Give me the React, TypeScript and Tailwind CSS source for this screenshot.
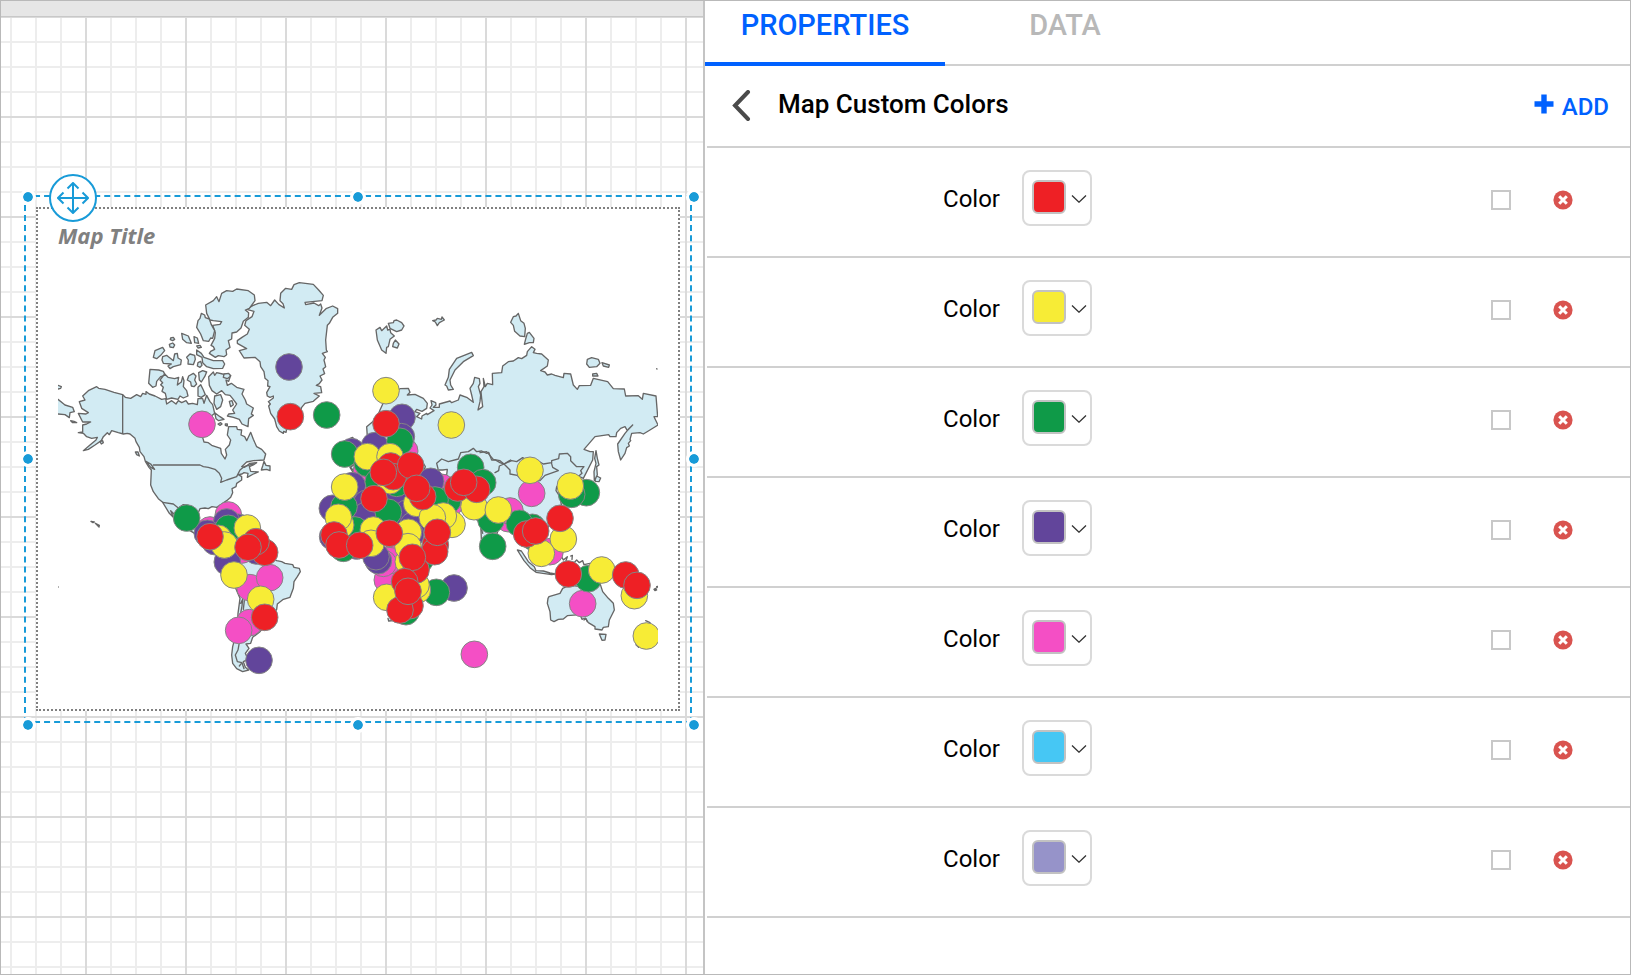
import React from "react";

const swatches = [
    { id: "red", hex: "#ee2025" },
    { id: "yellow", hex: "#f7ec36" },
    { id: "green", hex: "#0f9a48" },
    { id: "purple", hex: "#62459b" },
    { id: "pink", hex: "#f44fc5" },
    { id: "sky", hex: "#46c7f4" },
    { id: "lavender", hex: "#9693c9" },
];

// Map units are a third of a pixel. Later layers are painted over earlier ones.
const bubbleLayers: { color: string; points: [number, number][] }[] = [
    {
        color: "#f44fc5",
        points: [
            [486, 463], [1094, 543], [980, 600], [1205, 652], [1042, 930], [1062, 862], [1050, 872], [1030, 880],
            [565, 735], [510, 780], [605, 840], [630, 953], [689, 923], [628, 1058], [596, 1081], [1303, 1153],
            [1475, 670], [1405, 746], [1410, 723], [1530, 845], [1628, 1001], [1230, 700],
        ],
    },
    {
        color: "#62459b",
        points: [
            [747, 291], [1086, 442], [1084, 500], [1004, 527], [935, 545], [1172, 634], [937, 647], [877, 715],
            [980, 700], [980, 735], [1070, 655], [1070, 690], [1100, 730], [1120, 765], [1112, 795], [878, 800],
            [950, 828], [1015, 872], [1008, 860], [1242, 954], [595, 772], [560, 756], [502, 790], [525, 815],
            [562, 876], [650, 843], [657, 1171],
        ],
    },
    {
        color: "#0f9a48",
        points: [
            [440, 744], [860, 435], [1080, 514], [914, 552], [982, 580], [1015, 635], [1070, 640], [1292, 592],
            [1328, 638], [912, 710], [1045, 727], [1223, 692], [1185, 690], [945, 780], [910, 835], [1140, 870],
            [1098, 1025], [1189, 967], [565, 775], [1353, 750], [1358, 829], [1477, 772], [1478, 800], [1438, 760],
            [1639, 668], [1595, 673], [1645, 926],
        ],
    },
    {
        color: "#f7ec36",
        points: [
            [1038, 362], [982, 560], [1050, 560], [1234, 465], [914, 651], [902, 765], [895, 742], [1050, 632],
            [1130, 700], [1236, 763], [1210, 738], [1177, 743], [1302, 710], [1375, 720], [1000, 780], [993, 820],
            [1105, 787], [1105, 875], [1104, 830], [1040, 982], [1132, 960], [1128, 945], [622, 774], [535, 805],
            [553, 825], [582, 915], [662, 988], [1470, 601], [1591, 648], [1570, 807], [1504, 850], [1685, 900],
            [1783, 977], [1819, 1098],
        ],
    },
    {
        color: "#ee2025",
        points: [
            [751, 440], [1038, 461], [1052, 588], [1060, 620], [1030, 607], [1112, 586], [1148, 680], [1130, 655],
            [1002, 686], [1253, 654], [1310, 658], [1271, 637], [882, 795], [897, 825], [959, 826], [1048, 790],
            [1186, 825], [1184, 845], [1192, 787], [1128, 900], [1117, 862], [1094, 935], [1110, 1007], [1080, 1020],
            [1104, 964], [510, 800], [674, 847], [648, 815], [624, 832], [674, 1042], [1460, 792], [1487, 783],
            [1560, 745], [1585, 912], [1757, 915], [1791, 946],
        ],
    },
];

function WorldMap() {
    return (
        <svg className="block h-[420px] w-[600px]" viewBox="54 0 1800 1260" role="img" aria-label="World map with coloured bubbles">
            <g fill="#d2ebf3" stroke="#666" strokeWidth="4" strokeLinejoin="round" strokeLinecap="round">
                {/* Greenland */}
                <path d="M638 107L655 100 680 97 692 107 704 90 716 103 733 114 729 101 720 92 722 70 737 55 755 58 762 44 778 38 820 43 836 60 850 76 846 92 795 97 797 104 822 99 836 107 842 102 846 114 838 136 858 116 878 108 893 116 893 130 878 142 868 160 862 166 857 210 859 240 862 245 847 250 856 262 852 270 857 290 849 297 854 311 840 318 846 330 838 341 829 346 842 350 845 368 822 370 838 378 820 394 795 400 785 412 776 440 740 478 738 487 731 484 730 490 718 483 710 470 704 447 692 430 686 408 691 402 685 395 700 384 700 378 690 382 682 378 680 368 690 350 683 348 684 332 675 325 672 305 662 290 660 275 645 262 612 264 598 242 620 236 592 220 592 212 606 202 622 192 628 178 614 166 618 152 636 140 642 124 620 118Z" />

                {/* Arctic islands */}
                <path d="M497 105L520 92 530 80 537 95 545 70 560 62 578 64 590 57 625 62 643 75 645 92 628 115 616 120 626 128 625 142 610 154 603 174 590 186 576 189 575 207 565 212 570 232 558 240 560 254 552 260 535 257 526 262 508 250 512 244 524 238 520 230 513 226 524 205 526 188 518 166 540 163 545 155 520 152 510 150 500 130Z" />
                <path d="M484 130L494 135 496 143 508 147 514 164 524 182 518 205 512 204 506 214 490 212 482 192 470 172 474 152 480 145Z" />
                <path d="M425 190L445 198 454 220 440 218 428 208Z" />
                <path d="M462 200L472 204 476 220 464 218Z" />
                <path d="M392 204l8-2 4 6-6 4-7-3zM388 223l10-4 6 6-4 8-10-2zM470 228l10-2 4 6-10 2z" />
                <path d="M340 262L345 242 368 232 374 242 362 256 350 266Z" />
                <path d="M368 260L380 256 400 272 404 252 412 250 414 264 424 270 422 284 400 290 390 296 384 288 394 282 370 280 366 270Z" />
                <path d="M440 262L450 252 464 256 466 268 460 284 444 282 445 270Z" />
                <path d="M470 240L484 250 492 262 520 272 548 272 554 282 548 295 520 296 500 290 488 278 486 262 470 254Z" />
                <path d="M474 278l8-4 4 12-6 6-8-4z" />
                <path d="M330 298L356 300 370 304 376 316 362 320 350 334 348 348 338 352 326 340Z" />
                <path d="M374 312L384 322 404 326 416 322 412 345 424 336 428 320 432 332 430 350 440 362 444 378 430 384 420 378 414 388 395 384 380 388 376 370 366 364 370 352 362 344 368 338 360 330Z" />
                <path d="M446 318L460 310 468 318 464 330 470 342 462 350 454 348 452 336 442 330Z" />
                <path d="M476 308L488 302 500 306 494 320 484 336 478 330Z" />
                <path d="M474 378L474 352 482 344 490 360 496 374 484 382Z" />
                <path d="M506 320L520 306 524 316 530 308 548 312 572 316 566 334 558 330 562 346 574 340 590 352 612 358 606 372 616 390 620 402 640 414 634 432 640 436 626 446 624 470 606 462 598 448 580 442 562 438 566 432 584 430 578 420 590 402 578 386 570 376 556 374 545 362 530 372 516 362 508 346Z" />
                <path d="M552 312l14-2 6 8-10 8-12-4zM524 378L542 374 548 390 542 410 530 418 522 400ZM568 394l8-2 4 12-8 6zM534 462l8-4 4 4-6 4zM556 462l6 0 0 6-6-2z" />
                <path d="M524 428L540 440 552 448 536 452 528 446Z" />

                {/* North America */}
                <path d="M170 350L176 355 195 358 222 367 248 374 256 382 272 385 290 374 302 380 308 370 318 373 318 365 328 372 345 378 365 388 377 386 380 402 395 392 408 402 415 392 425 398 438 392 445 402 458 400 472 404 474 386 488 386 492 400 500 376 510 395 518 404 524 430 500 450 470 480 488 503 492 516 505 518 515 526 533 532 542 535 544 550 555 567 560 555 556 538 568 525 572 510 562 495 566 470 590 470 592 478 605 480 603 495 614 500 620 512 632 487 640 508 650 530 665 538 677 552 672 570 640 572 620 576 605 590 614 592 630 580 650 578 640 585 628 590 632 604 655 606 640 612 622 622 624 610 612 608 606 612 595 614 605 620 605 630 590 640 588 650 576 656 578 668 572 682 560 692 545 702 530 712 516 710 505 716 495 714 480 716 474 730 480 760 520 800 480 800 430 770 405 735 392 722 400 742 388 730 368 697 355 686 340 665 332 645 334 600 327 592 316 574 312 560 300 545 298 532 288 515 285 505 270 492 262 490 250 492 235 488 215 482 208 494 202 488 190 500 184 512 165 525 145 538 130 542 150 525 168 510 172 502 155 505 140 500 130 490 115 488 128 486 128 465 140 462 152 456 128 456 115 430 138 432 145 428 125 415 118 395 135 390 128 378 145 362Z" />
                <path d="M672 574L678 586 690 588 690 602 680 598 664 600 668 588Z" />
                <path d="M286 546l8 0 4 12-8-4zM318 574l14 8 12 16-12-6zM180 515l8-3 2 6-6 4z" />
                <path fill="none" d="M248 374V490M340 585H480L490 590 505 592 525 598 538 610 545 625 542 637 560 630 590 620 600 600 612 590 640 582M368 697L400 702 415 714 430 704 446 706" />
                <path d="M54 388L75 405 98 412 103 425 90 428 88 443 75 434 54 432M54 346L64 350 62 355 54 357M92 452l10 2 8 4-12 0zM153 754l10 2-4 2zM166 760l12 6-1 5z" />

                {/* South America */}
                <g transform="translate(360 630)">
                    <path d="M350 242L365 245 375 250 398 254 402 262 418 265 421 275 412 290 402 305 400 325 390 352 370 358 352 372 350 388 320 430 300 455 278 472 272 490 258 492 267 505 256 520 264 538 250 545 256 562 266 570 248 575 230 566 218 550 215 525 218 500 222 485 232 440 234 400 240 355 225 320 185 260 180 220 200 160 260 170 320 215Z" />
                    <path fill="none" d="M242 370L248 358 246 378 240 410M253 362L250 388M238 488L234 510 226 525 232 545 246 548 238 558M246 548L252 566" />
                </g>

                {/* Europe and Asia */}
                <g transform="translate(780 0)">
                    <path d="M202 500L200 470 218 455 232 440 240 420 250 398 262 395 280 372 300 356 325 355 330 367 322 375 345 373 370 385 382 400 380 415 366 424 350 418 345 425 360 430 350 440 365 447 366 438 380 430 382 434 402 422 390 414 396 405 393 392 407 398 408 405 400 412 418 412 418 402 450 393 455 398 475 390 480 375 500 382 520 397 515 375 510 355 520 340 524 322 538 326 540 340 535 350 542 375 540 395 534 420 548 410 545 385 543 365 552 350 550 325 556 350 562 340 578 344 577 310 605 308 608 288 625 275 640 273 655 263 665 266 680 256 682 245 695 230 705 238 700 248 710 250 725 252 745 270 742 288 722 302 735 306 742 315 755 312 765 316 790 323 792 310 812 312 820 345 832 358 838 347 872 346 880 325 923 335 940 356 973 357 977 378 1015 377 1027 388 1030 370 1068 378 1073 440 1062 440 1074 465 1045 483 1030 492 1020 488 995 490 990 508 992 512 985 520 988 528 980 533 975 550 962 570 955 545 953 522 975 490 985 478 998 465 982 482 975 470 962 475 950 488 948 500 930 500 926 494 885 500 852 538 870 545 880 545 878 570 850 625 835 618 815 640 780 645 770 650 768 662 780 680 785 710 760 750 730 790 700 810 660 800 600 760 580 830 560 850 545 830 542 760 525 745 480 720 440 700 430 760 380 790 350 740 300 720 250 640 180 640 150 592 200 560 230 520Z" />
                    <path fill="#fff" d="M412 600L428 600 442 598 440 615 425 615Z" />
                    <path fill="none" d="M370 580L376 590 372 600M414 596L410 580 425 567 445 575 475 567 482 548 505 545 520 535 530 545 545 543 560 550 566 547 575 570 586 570 600 578M600 578L612 582 632 570" />
                    <path d="M435 345L445 322 448 298 470 265 515 247 520 257 490 275 465 300 450 330 452 345 460 358 445 360 440 348Z" />
                    <path d="M228 180L240 172 245 182 260 168 263 180 270 178 272 188 283 198 270 208 265 230 260 232 258 250 245 240 232 210Z" />
                    <path d="M265 160L280 158 282 152 290 150 305 158 312 168 305 180 290 185 270 175Z" />
                    <path d="M280 220L286 210 297 222 292 234 278 230Z" />
                    <path d="M398 152L408 150 412 145 424 148 426 141 433 150 418 158 412 167 406 156Z" />
                    <path d="M150 505l8-3 4 6-8 4zM152 592L164 606" />
                </g>

                {/* East Asia borders and islands */}
                <g transform="translate(1320 60)">
                    <path fill="none" d="M0 488L20 485 40 508 60 512 72 522 95 512 110 515 128 503 145 515 170 510 190 522 215 518 215 512 236 506 238 492 262 490 272 500 272 512 290 530 312 530 302 542 306 550 292 562M72 522L90 540 90 552 112 556 122 568 140 562 155 576 180 572 195 556 235 542 218 532 214 518M72 522L58 528 56 542 45 548" />
                    <path d="M115 70L122 92 132 100 136 115 134 140 120 138 104 124 100 106 92 97 100 80 108 78ZM148 127L162 145 160 158 148 158 133 163 137 147 142 130Z" />
                    <path d="M322 208L335 203 355 208 360 220 350 230 328 232 320 222ZM366 218L388 225 386 232 370 228ZM338 252L350 250 354 258 338 258ZM530 236l1 1" />
                    <path d="M348 482L352 505 357 525 350 530 352 555 343 572 342 545 348 520 344 505ZM345 570L350 558 362 564 357 575 347 574Z" />
                </g>

                {/* Oceania */}
                <g transform="translate(1320 510)">
                    <path d="M248 445L240 460 207 470 204 475 202 490 210 515 212 540 222 545 235 538 250 537 262 527 300 524 306 538 316 534 325 548 345 560 345 567 366 570 370 562 385 560 388 540 403 510 400 490 385 475 368 455 360 430 320 445 300 440 270 435Z" />
                    <path d="M358 582L378 583 375 600 366 601ZM112 330L124 333 145 365 163 380 168 392 190 393 210 399 226 402 215 404 168 397 150 383 132 362Z" />
                    <path fill="none" d="M236 362L245 350 250 360 262 350 256 368M272 348L277 346 276 358M282 368L290 360 298 368 308 362 312 374 330 370M312 540L318 536 322 545M497 542L510 548M468 614L476 622M4 268L8 280" />
                    <path d="M522 448l5-3 3 5-5 2zM530 440l3-1-2 4z" fill="#666" />
                </g>
                <path d="M1044 1045L1046 1053 1060 1052M54 950V952" />
            </g>

            {bubbleLayers.map(({ color, points }) => (
                <g key={color} fill={color} stroke="#858585" strokeWidth="3">
                    {points.map(([x, y]) => (
                        <circle key={`${x}-${y}`} cx={x} cy={y} r="40" />
                    ))}
                </g>
            ))}
        </svg>
    );
}

function MoveHandle() {
    return (
        <button
            type="button"
            aria-label="Move map"
            className="absolute -top-[23px] left-[23px] z-10 flex size-12 items-center justify-center rounded-full border-2 border-[#189bd8] bg-white"
        >
            <svg className="size-8 shrink-0" viewBox="0 0 32 32" fill="none" stroke="#189bd8" strokeWidth="2">
                <path d="M16 0.5V31.5M0.5 16H31.5M10.5 6.5L16 1L21.5 6.5M10.5 25.5L16 31L21.5 25.5M6.5 10.5L1 16L6.5 21.5M25.5 10.5L31 16L25.5 21.5" />
            </svg>
        </button>
    );
}

const handlePositions = [
    "-left-1.5 -top-2",
    "left-1/2 -top-2 -translate-x-1/2",
    "-right-3 -top-2",
    "-left-1.5 top-1/2 -translate-y-1/2",
    "-right-3 top-1/2 -translate-y-1/2",
    "-left-1.5 -bottom-3",
    "left-1/2 -bottom-3 -translate-x-1/2",
    "-right-3 -bottom-3",
];

function DesignCanvas() {
    return (
        <section aria-label="Design canvas" className="flex min-w-0 flex-col">
            <div className="h-4 border-b border-[#c8c8c8] bg-[#e6e6e6]" />
            <div className="flex-1 overflow-hidden bg-white bg-[linear-gradient(90deg,#dadada_2px,transparent_2px),linear-gradient(#dadada_2px,transparent_2px),linear-gradient(#ededed_2px,transparent_2px),linear-gradient(90deg,#ededed_2px,transparent_2px)] bg-[position:84px_-1px,84px_-1px,9px_-1px,9px_-1px] bg-[size:100px_100px,100px_100px,25px_25px,25px_25px] pt-[178px] pr-[11px] pl-[23px]">
                <div className="relative border-2 border-dashed border-[#189bd8] p-2.5">
                    {handlePositions.map((position) => (
                        <span key={position} className={`absolute size-4 rounded-full border-3 border-white bg-[#189bd8] bg-clip-padding ${position}`} />
                    ))}
                    <MoveHandle />
                    <div className="h-[504px] overflow-hidden border-2 border-dotted border-[#808080] bg-white pt-2.5 pl-5">
                        <h2 className="font-['Open_Sans',sans-serif] text-[22px] leading-8 font-bold text-[#808080] italic">Map Title</h2>
                        <div className="pt-[19px]">
                            <WorldMap />
                        </div>
                    </div>
                </div>
            </div>
        </section>
    );
}

function ColorRow({ id, hex }: { id: string; hex: string }) {
    return (
        <li className="flex items-center border-b-2 border-[#d0d0d0] pt-[22px] pr-[57px] pb-[30px]">
            <label htmlFor={`color-${id}`} className="w-[293px] shrink-0 pt-0.5 text-right text-2xl text-black">
                Color
            </label>
            <button
                id={`color-${id}`}
                type="button"
                className="ml-[22px] flex h-14 w-[70px] shrink-0 items-center gap-[5px] rounded-lg border-2 border-[#dadada] bg-white pb-0.5 pl-2"
            >
                <span className="size-[34px] shrink-0 rounded-md border-2 border-[#c2c2c2]" style={{ backgroundColor: hex }} />
                <svg className="mt-1 h-2 w-4 shrink-0" viewBox="0 0 16 8" fill="none" stroke="#333" strokeWidth="1.3">
                    <path d="M1 0.5L8 7.2L15 0.5" />
                </svg>
            </button>
            <input
                type="checkbox"
                aria-label={`Select ${id}`}
                className="mt-1 ml-auto size-5 shrink-0 appearance-none border-2 border-[#c8c8c8] bg-white checked:bg-[#0061ff]"
            />
            <button type="button" aria-label={`Remove ${id}`} className="mt-[3px] ml-[42px] shrink-0">
                <svg className="size-5" viewBox="0 0 20 20">
                    <circle cx="10" cy="10" r="9.6" fill="#d9534f" />
                    <path d="M6.2 6.2L13.8 13.8M13.8 6.2L6.2 13.8" stroke="#fff" strokeWidth="3" />
                </svg>
            </button>
        </li>
    );
}

export default function App() {
    return (
        <main className="grid min-h-screen grid-cols-[702fr_927fr] border border-[#b9b9b9] bg-white font-[Roboto,sans-serif]">
            <DesignCanvas />

            <section aria-label="Properties panel" className="min-w-0 border-l-2 border-[#c4c4c4]">
                <div role="tablist" className="flex h-[65px] border-b-2 border-[#d0d0d0] text-[29px] leading-8 font-medium">
                    <button type="button" role="tab" aria-selected="true" className="-mb-0.5 w-60 border-b-4 border-[#0061ff] pb-3.5 text-[#0061ff]">
                        PROPERTIES
                    </button>
                    <button type="button" role="tab" aria-selected="false" className="-mb-0.5 w-60 border-b-4 border-transparent pb-3.5 text-[#b8b8b8]">
                        DATA
                    </button>
                </div>

                <div className="pl-0.5">
                    <header className="flex h-[82px] items-center border-b-2 border-[#d0d0d0] pr-[21px] pl-6">
                        <button type="button" aria-label="Back" className="shrink-0">
                            <svg className="h-8 w-5" viewBox="0 0 20 32" fill="none" stroke="#4a4a4a" strokeWidth="4" strokeLinecap="round" strokeLinejoin="miter">
                                <path d="M17 2L4 15.5L17 29" />
                            </svg>
                        </button>
                        <h1 className="ml-[27px] pb-1 text-[26px] leading-8 font-medium text-black">Map Custom Colors</h1>
                        <button type="button" className="ml-auto flex items-center gap-2 pt-0.5 text-2xl font-medium text-[#0061ff]">
                            <svg className="mb-1.5 size-5" viewBox="0 0 20 20" fill="none" stroke="currentColor" strokeWidth="5.4">
                                <path d="M10 0.5V19.5M0.5 10H19.5" />
                            </svg>
                            ADD
                        </button>
                    </header>

                    <ul>
                        {swatches.map((swatch) => (
                            <ColorRow key={swatch.id} id={swatch.id} hex={swatch.hex} />
                        ))}
                    </ul>
                </div>
            </section>
        </main>
    );
}
